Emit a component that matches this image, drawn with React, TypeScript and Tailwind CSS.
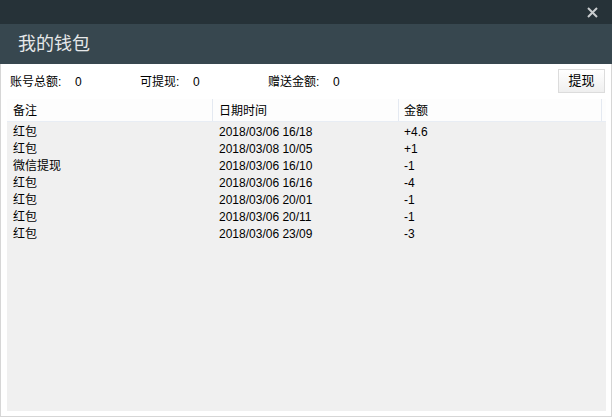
import React from "react";

const rows = [
  ["红包", "2018/03/06 16/18", "+4.6"],
  ["红包", "2018/03/08 10/05", "+1"],
  ["微信提现", "2018/03/06 16/10", "-1"],
  ["红包", "2018/03/06 16/16", "-4"],
  ["红包", "2018/03/06 20/01", "-1"],
  ["红包", "2018/03/06 20/11", "-1"],
  ["红包", "2018/03/06 23/09", "-3"],
];

export default function App() {
  return (
    <div
      className="w-[612px] h-[417px] flex flex-col overflow-hidden text-black"
      style={{ fontFamily: '"Liberation Sans", "Noto Sans CJK SC", sans-serif' }}
    >
      <div className="h-[24px] bg-[#263238] flex items-center justify-end pr-[14px]">
        <svg width="11" height="11" viewBox="0 0 11 11">
          <path d="M1 1 L10 10 M10 1 L1 10" stroke="#c9cdcf" strokeWidth="2" />
        </svg>
      </div>
      <div className="h-[40px] bg-[#37474f] flex items-center pl-[18px] text-[18px] text-[#e6e8e9]">
        我的钱包
      </div>
      <div className="flex-1 flex flex-col bg-white border-x border-b border-[#d6d6d6] pl-[6px] pr-[5px] pb-[5px]">
        <div className="h-[35px] flex items-start text-[12px]">
          <div className="flex items-center h-[35px] pl-[3px]">
            <span className="w-[65px]">账号总额:</span>
            <span className="w-[65px]">0</span>
            <span className="w-[53px]">可提现:</span>
            <span className="w-[75px]">0</span>
            <span className="w-[65px]">赠送金额:</span>
            <span>0</span>
          </div>
          <div className="flex-1" />
          <button className="mt-[5px] mr-[1px] w-[47px] h-[24px] border border-[#dcdcdc] bg-gradient-to-b from-white to-[#efefef] text-[13px] flex items-center justify-center">
            提现
          </button>
        </div>
        <div className="flex-1 bg-[#f0f0f0] flex flex-col text-[12px]">
          <div className="h-[23px] flex bg-[#fdfdfd] border-b border-[#e8edf4]">
            <div className="w-[206px] border-r border-[#e4e9f1] pl-[6px] pt-[2px] flex items-center">备注</div>
            <div className="w-[186px] border-r border-[#e4e9f1] pl-[6px] pt-[2px] flex items-center">日期时间</div>
            <div className="w-[203px] border-r border-[#e4e9f1] pl-[5px] pt-[2px] flex items-center">金额</div>
            <div className="flex-1" />
          </div>
          <div className="pt-[1px] flex flex-col">
            {rows.map((r, i) => (
              <div key={i} className="h-[17px] flex items-center">
                <div className="w-[206px] pl-[6px]">{r[0]}</div>
                <div className="w-[186px] pl-[6px]">{r[1]}</div>
                <div className="pl-[5px]">{r[2]}</div>
              </div>
            ))}
          </div>
        </div>
      </div>
    </div>
  );
}
